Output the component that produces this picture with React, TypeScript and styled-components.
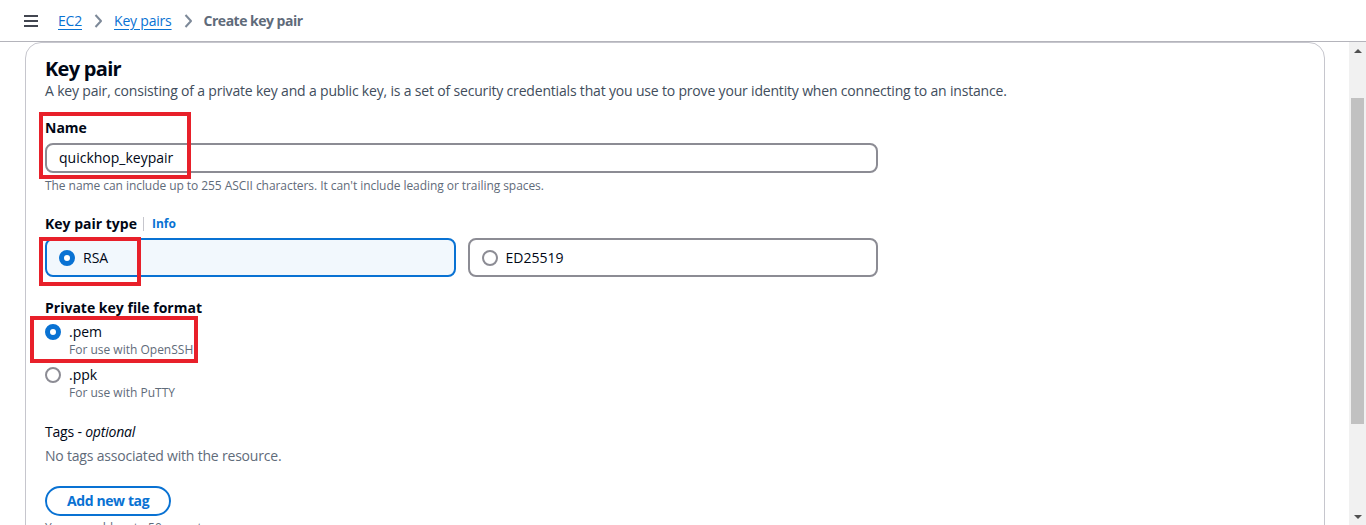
import React from "react";
import styled, { createGlobalStyle } from "styled-components";

const GlobalStyle = createGlobalStyle`
  html, body { margin: 0; padding: 0; background: #ffffff; overflow: hidden; }
  * { box-sizing: border-box; }
  body { font-family: "Open Sans", "Noto Sans", Arial, sans-serif; color: #000716; }
`;

const Page = styled.div`
  width: 1366px;
  height: 525px;
  display: flex;
  flex-direction: column;
  overflow: hidden;
  background: #ffffff;
`;

const TopBar = styled.header`
  height: 42px;
  flex: none;
  display: flex;
  align-items: center;
  padding-left: 23px;
  border-bottom: 1px solid #b4b4bb;
`;

const MenuButton = styled.span`
  display: inline-flex;
  width: 16px;
  height: 16px;
  color: #424650;
`;

const Breadcrumbs = styled.nav`
  display: flex;
  align-items: center;
  margin-left: 19px;
  font-size: 14px;
  line-height: 20px;
`;

const Crumb = styled.a`
  color: #0972d3;
  text-decoration: underline;
  text-underline-offset: 3px;
  text-decoration-thickness: 1px;
  letter-spacing: -0.2px;
`;

const CurrentCrumb = styled.span`
  color: #5f6b7a;
  font-weight: 700;
  letter-spacing: -0.5px;
`;

const ChevronIcon = styled.span`
  display: inline-flex;
  width: 16px;
  height: 16px;
  margin: 0 8px;
  color: #7d8998;
`;

const Body = styled.div`
  flex: 1;
  display: flex;
  min-height: 0;
`;

const Main = styled.main`
  flex: 1;
  overflow: hidden;
  padding: 0 24px 0 25px;
`;

const Card = styled.section`
  border: 1px solid #c6c6cd;
  border-radius: 16px;
  padding: 14px 19px 40px;
  min-height: 600px;
`;

const Heading = styled.h2`
  margin: 0;
  font-size: 20px;
  line-height: 24px;
  font-weight: 700;
  letter-spacing: -0.7px;
  color: #000716;
`;

const Description = styled.p`
  margin: 0;
  font-size: 14px;
  line-height: 20px;
  letter-spacing: -0.18px;
  color: #414d5c;
`;

const Field = styled.div<{ $gap: number }>`
  position: relative;
  margin-top: ${(p) => p.$gap}px;
`;

const LabelRow = styled.div`
  display: flex;
  align-items: center;
`;

const Label = styled.label`
  font-size: 14px;
  line-height: 20px;
  font-weight: 700;
  color: #000716;
`;

const Divider = styled.span`
  width: 1px;
  height: 14px;
  background: #c6c6cd;
  margin: 0 8px 0 6px;
`;

const InfoLink = styled.a`
  font-size: 12px;
  line-height: 16px;
  font-weight: 700;
  color: #0972d3;
`;

const TextInput = styled.div`
  margin-top: 5px;
  width: 833px;
  height: 30px;
  border: 2px solid #8c8c94;
  border-radius: 8px;
  padding: 0 12px;
  display: flex;
  align-items: center;
  font-size: 14px;
  line-height: 20px;
  color: #000716;
`;

const Hint = styled.div<{ $gap?: number }>`
  margin-top: ${(p) => p.$gap ?? 4}px;
  font-size: 12px;
  line-height: 16px;
  letter-spacing: -0.06px;
  color: #5f6b7a;
`;

const Tiles = styled.div`
  margin-top: 4px;
  width: 833px;
  display: grid;
  grid-template-columns: 1fr 1fr;
  gap: 12px;
`;

const Tile = styled.div<{ $selected?: boolean }>`
  position: relative;
  height: 39px;
  border: 2px solid ${(p) => (p.$selected ? "#0972d3" : "#8c8c94")};
  background: ${(p) => (p.$selected ? "#f2f8fd" : "#ffffff")};
  border-radius: 8px;
  padding: 0 12px;
  display: flex;
  align-items: center;
  gap: 8px;
  font-size: 14px;
  line-height: 20px;
`;

const RadioDot = styled.span<{ $checked?: boolean }>`
  flex: none;
  width: 16px;
  height: 16px;
  border-radius: 50%;
  background: #ffffff;
  border: ${(p) => (p.$checked ? "5px solid #0972d3" : "2px solid #8c8c94")};
`;

const OptionList = styled.div`
  margin-top: 4px;
  display: flex;
  flex-direction: column;
  gap: 7px;
`;

const Option = styled.div`
  position: relative;
  display: grid;
  grid-template-columns: 16px auto;
  column-gap: 8px;
  align-items: start;
`;

const OptionDot = styled(RadioDot)`
  margin-top: 2px;
`;

const OptionText = styled.div`
  font-size: 14px;
  line-height: 20px;
  color: #000716;
`;

const OptionHint = styled.div`
  font-size: 12px;
  line-height: 16px;
  color: #5f6b7a;
`;

const PlainText = styled.div<{ $muted?: boolean; $gap: number }>`
  margin-top: ${(p) => p.$gap}px;
  font-size: 14px;
  line-height: 20px;
  letter-spacing: -0.2px;
  color: ${(p) => (p.$muted ? "#5f6b7a" : "#000716")};
  em { font-style: italic; }
`;

const PillButton = styled.button`
  display: block;
  margin-top: 20px;
  height: 30px;
  padding: 0 20px;
  border: 2px solid #0972d3;
  border-radius: 20px;
  background: #ffffff;
  color: #0972d3;
  font-family: inherit;
  font-size: 14px;
  line-height: 20px;
  font-weight: 700;
  letter-spacing: -0.4px;
`;

const Highlight = styled.span<{ $l: number; $t: number; $w: number; $h: number }>`
  position: absolute;
  left: ${(p) => p.$l}px;
  top: ${(p) => p.$t}px;
  width: ${(p) => p.$w}px;
  height: ${(p) => p.$h}px;
  border: 4px solid #e8202a;
  pointer-events: none;
`;

const ScrollTrack = styled.div`
  width: 17px;
  flex: none;
  background: #f1f1f1;
  display: flex;
  flex-direction: column;
`;

const ScrollArrow = styled.div<{ $down?: boolean }>`
  height: 17px;
  flex: none;
  display: flex;
  align-items: center;
  justify-content: center;
  &::before {
    content: "";
    width: 0;
    height: 0;
    border-left: 4px solid transparent;
    border-right: 4px solid transparent;
    ${(p) =>
      p.$down ? "border-top: 4px solid #505050;" : "border-bottom: 4px solid #505050;"}
  }
`;

const ScrollThumb = styled.div`
  margin: 39px 2px 0;
  height: 326px;
  background: #c1c1c1;
`;

const ScrollSpacer = styled.div`
  flex: 1;
`;

const Chevron = () => (
  <ChevronIcon>
    <svg width="16" height="16" viewBox="0 0 16 16" fill="none">
      <path d="M5.5 2 11 8l-5.5 6" stroke="currentColor" strokeWidth="2" strokeLinejoin="round" />
    </svg>
  </ChevronIcon>
);

export default function App() {
  return (
    <>
      <GlobalStyle />
      <Page>
        <TopBar>
          <MenuButton>
            <svg width="16" height="16" viewBox="0 0 16 16" fill="none">
              <path d="M1 3h14M1 8h14M1 13h14" stroke="currentColor" strokeWidth="2" />
            </svg>
          </MenuButton>
          <Breadcrumbs>
            <Crumb>EC2</Crumb>
            <Chevron />
            <Crumb>Key pairs</Crumb>
            <Chevron />
            <CurrentCrumb>Create key pair</CurrentCrumb>
          </Breadcrumbs>
        </TopBar>
        <Body>
          <Main>
            <Card>
              <Heading>Key pair</Heading>
              <Description>
                A key pair, consisting of a private key and a public key, is a set of security
                credentials that you use to prove your identity when connecting to an instance.
              </Description>

              <Field $gap={15}>
                <Label>Name</Label>
                <TextInput>quickhop_keypair</TextInput>
                <Highlight $l={-6} $t={-4} $w={152} $h={67} />
                <Hint $gap={5}>
                  The name can include up to 255 ASCII characters. It can't include leading or
                  trailing spaces.
                </Hint>
              </Field>

              <Field $gap={20}>
                <LabelRow>
                  <Label>Key pair type</Label>
                  <Divider />
                  <InfoLink>Info</InfoLink>
                </LabelRow>
                <Tiles>
                  <Tile $selected>
                    <RadioDot $checked />
                    RSA
                    <Highlight $l={-8} $t={-3} $w={102} $h={49} />
                  </Tile>
                  <Tile>
                    <RadioDot />
                    ED25519
                  </Tile>
                </Tiles>
              </Field>

              <Field $gap={19}>
                <Label>Private key file format</Label>
                <OptionList>
                  <Option>
                    <OptionDot $checked />
                    <div>
                      <OptionText>.pem</OptionText>
                      <OptionHint>For use with OpenSSH</OptionHint>
                    </div>
                    <Highlight $l={-15} $t={-6} $w={168} $h={47} />
                  </Option>
                  <Option>
                    <OptionDot />
                    <div>
                      <OptionText>.ppk</OptionText>
                      <OptionHint>For use with PuTTY</OptionHint>
                    </div>
                  </Option>
                </OptionList>
              </Field>

              <PlainText $gap={21}>
                Tags - <em>optional</em>
              </PlainText>
              <PlainText $gap={4} $muted>
                No tags associated with the resource.
              </PlainText>
              <PillButton>Add new tag</PillButton>
              <Hint>You can add up to 50 more tags.</Hint>
            </Card>
          </Main>
          <ScrollTrack>
            <ScrollArrow />
            <ScrollThumb />
            <ScrollSpacer />
            <ScrollArrow $down />
          </ScrollTrack>
        </Body>
      </Page>
    </>
  );
}
